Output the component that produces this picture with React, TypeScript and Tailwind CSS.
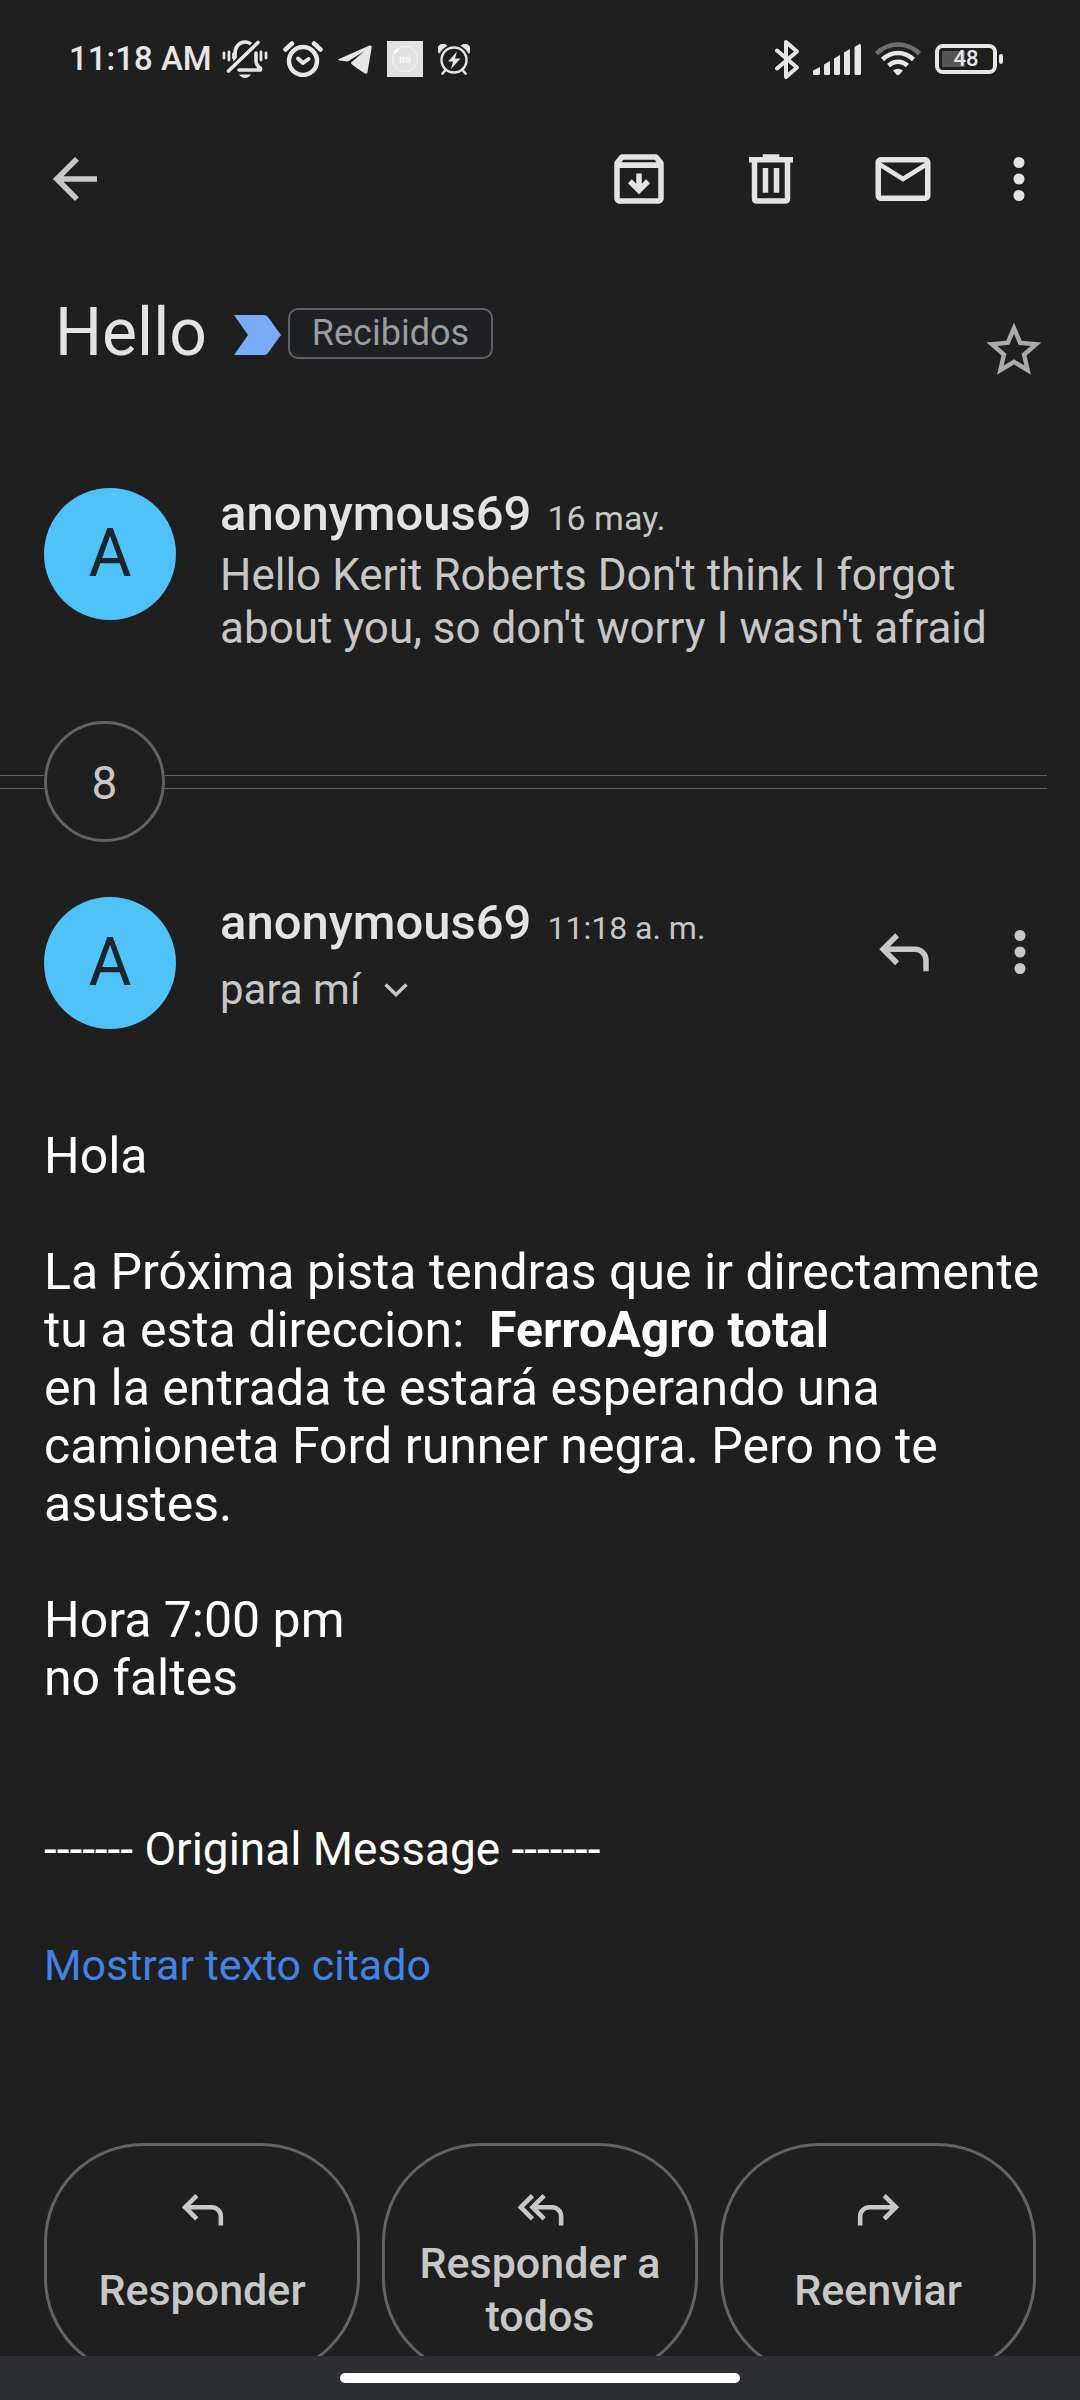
import type { ReactNode } from "react";

const REPLY = "M9.5 5.9 4.41 11l5.09 5.1M4.6 11H16a4 4 0 0 1 4 4v4";

function StrokeIcon({ d, size }: { d: string; size: string }) {
  return (
    <svg viewBox="0 0 24 24" className={size} fill="none" stroke="currentColor" strokeWidth="2" aria-hidden="true">
      <path d={d} />
    </svg>
  );
}

function FillIcon({ d }: { d: string }) {
  return (
    <svg viewBox="0 0 24 24" className="size-[66px]" fill="currentColor" fillRule="evenodd" aria-hidden="true">
      <path d={d} />
    </svg>
  );
}

function IconButton({ label, children }: { label: string; children: ReactNode }) {
  return (
    <button type="button" aria-label={label} className="size-[66px] shrink-0">
      {children}
    </button>
  );
}

function MoreIcon() {
  return (
    <svg viewBox="0 0 24 24" className="size-[66px]" fill="currentColor" aria-hidden="true">
      <circle cx="12" cy="6" r="2" />
      <circle cx="12" cy="12" r="2" />
      <circle cx="12" cy="18" r="2" />
    </svg>
  );
}

function StatusBar() {
  return (
    <div className="flex h-[118px] shrink-0 items-center justify-between pr-[77px] pl-[69px] text-[#e6e6e6]">
      <div className="flex items-center gap-[15px]">
        <div className="flex items-center gap-[10px]">
          <span className="text-[33px] leading-10 font-medium">11:18 AM</span>
          <svg viewBox="0 0 46 38" className="h-[38px] w-[46px]" fill="none" stroke="currentColor" strokeWidth="3.6" strokeLinecap="round" aria-label="Vibración">
            <path d="M13 23V14C13 7 17 2 23 2c3 0 5 1 7 3" />
            <path d="M34 13v8c0 3 1.500 5 4.500 7.500v1.500H17" strokeLinejoin="round" />
            <path d="M6.500 30.500 35 2.500" stroke="#1f1f1f" strokeWidth="6" />
            <path d="M6.500 31 36 2.500" />
            <path d="M2 13v5M7 12v8M11.500 14v4M39 12v8M44 13v5" strokeWidth="2.800" />
            <path d="M17 34.500h12c-1.500 2.300-3.500 3.500-6 3.500s-4.500-1.200-6-3.500z" fill="currentColor" stroke="none" />
          </svg>
        </div>
        <svg viewBox="0 0 40 36" className="h-9 w-10" fill="none" stroke="currentColor" strokeLinecap="round" aria-label="Alarma">
          <circle cx="20" cy="20" r="14" strokeWidth="4.500" />
          <path d="M15 17.500 20 22l5.500-4" strokeWidth="4" strokeLinejoin="round" />
          <path d="M2.500 8.500 9 2.500M37.500 8.500 31 2.500" strokeWidth="4.500" />
        </svg>
        <svg viewBox="0 0 34 29" className="h-[29px] w-[34px]" fill="currentColor" aria-label="Telegram">
          <path d="M1 14 31.500.6c1.500-.5 2.500.3 2.200 2L29.500 27c-.3 1.700-1.500 2.200-3 1.300L18 22.500l-4.300-3.300c-.8-.7-.8-1.300 0-2.100L26 6.500 10.500 16c-1 .6-1.800.6-2.800.3L1.200 15.600c-1.100-.4-1.200-1.100-.2-1.600z" />
        </svg>
        <svg viewBox="0 0 36 36" className="size-9" aria-label="Mi">
          <rect width="36" height="36" fill="#e2e2e2" />
          <circle cx="18" cy="18" r="12.500" fill="none" stroke="#f6f6f6" strokeWidth="1" />
          <path d="m7.500 12 3.500-4" stroke="#fff" strokeWidth="2.500" />
          <text x="18" y="22" textAnchor="middle" fontSize="10" fontWeight="700" fill="#f8f8f8">mi</text>
        </svg>
        <svg viewBox="0 0 32 31" className="h-[31px] w-8" fill="none" stroke="currentColor" strokeLinecap="round" aria-label="Carga programada">
          <path d="M1 9a5 5 0 0 1 8-7zM31 9a5 5 0 0 0-8-7z" fill="currentColor" strokeWidth="1" />
          <circle cx="16" cy="16" r="13" stroke="#1f1f1f" strokeWidth="5" />
          <circle cx="16" cy="16" r="12.500" strokeWidth="2.400" />
          <path d="m7.500 26-3 3.500M24.500 26l3 3.500" strokeWidth="2.600" />
          <path d="M19 7.500 10 17.500h5L13 25l9.500-10.500H17z" fill="currentColor" stroke="none" />
        </svg>
      </div>
      <div className="flex items-center gap-[14px]">
        <svg viewBox="0 0 24 39" className="h-[39px] w-6" fill="none" stroke="currentColor" strokeWidth="4" strokeLinecap="round" strokeLinejoin="round" aria-label="Bluetooth">
          <path d="M2 10.500 22 27.500 11 37V2l11 9.500L2 28.500" />
        </svg>
        <svg viewBox="0 0 48 31" className="h-[31px] w-12" fill="currentColor" aria-label="Señal móvil">
          <path d="M0 26.500 7 23v6.500q0 1.500-1.500 1.500h-4Q0 31 0 29.500zM11 20.500l6-3.500v12.500q0 1.500-1.500 1.500h-3q-1.500 0-1.500-1.500zM21 14.500l6-3.500v18.500q0 1.500-1.500 1.500h-3q-1.500 0-1.500-1.500zM31 8.500 37 5v24.500q0 1.500-1.500 1.500h-3q-1.500 0-1.500-1.500zM41.500 3l5-3q1.500 0 1.500 1.500v28q0 1.500-1.500 1.500H43q-1.500 0-1.500-1.500z" />
        </svg>
        <svg viewBox="0 0 46 34" className="h-[34px] w-[46px]" fill="none" stroke="currentColor" strokeWidth="4.500" aria-label="Wi-Fi">
          <path d="M1.500 11.500Q11 2.500 23 2.500t21.500 9" stroke="#6e6e6e" />
          <path d="M7.500 17.500q7-6.500 15.500-6.500t15.500 6.500M13.500 23.500q4.500-3.800 9.500-3.800t9.500 3.800" />
          <path d="M18 28.500q5-3.500 10 0L24.500 32.500q-1.500 1.500-3 0z" fill="currentColor" stroke="none" />
        </svg>
        <div className="flex items-center gap-[2px]" aria-label="Batería 48 %">
          <div className="flex h-[30px] w-[62px] items-center justify-center rounded-lg border-4 border-[#e6e6e6] bg-linear-to-r from-[#555555] from-48% to-[#1f1f1f] to-48% bg-clip-content p-[3px]">
            <span className="text-[22px] leading-[22px] font-medium">48</span>
          </div>
          <div className="h-[10px] w-1 rounded-sm bg-[#e6e6e6]" />
        </div>
      </div>
    </div>
  );
}

function Avatar() {
  return (
    <div className="mt-[2px] flex size-[132px] shrink-0 items-center justify-center rounded-full bg-[#4fc3f7] text-[66px] leading-[72px] text-[#1b262c]">
      A
    </div>
  );
}

function ActionButton({ icon, children }: { icon: string; children: ReactNode }) {
  return (
    <button type="button" className="flex h-[234px] min-w-0 flex-1 flex-col items-center rounded-[99px] border-[3px] border-[#636266] px-5 pt-9 text-[43px] leading-[53px] font-medium text-[#c7c7c7]">
      <StrokeIcon d={icon} size="size-[55px] shrink-0" />
      <span className="flex h-[106px] items-center text-center">{children}</span>
    </button>
  );
}

export default function App() {
  return (
    <div className="flex h-screen flex-col bg-[#1f1f1f] font-['Roboto',sans-serif] text-[#c7c7c7]">
      <StatusBar />
      <header className="flex shrink-0 items-center justify-between pt-7 pr-7 pl-[42px] text-[#e3e3e3]">
        <button type="button" aria-label="Atrás" className="size-[66px] text-[#c7c7c7]">
          <StrokeIcon d="M12.700 4.700 5.400 12l7.300 7.300M5 12h15" size="size-[66px]" />
        </button>
        <div className="flex items-center gap-[50px]">
          <div className="flex items-center gap-[66px]">
            <IconButton label="Archivar">
              <FillIcon d="M20.540 5.230 19.150 3.550C18.880 3.210 18.470 3 18 3H6c-.470 0-.880.210-1.160.550L3.460 5.230C3.170 5.570 3 6.020 3 6.500V19c0 1.100.900 2 2 2h14c1.100 0 2-.900 2-2V6.500c0-.480-.170-.930-.460-1.270zM6.240 5h11.520l.600.900H5.640zM5 19V8h14v11zM16 13.500l-4 4-4-4 1.400-1.400 1.600 1.600V10h2v3.700l1.600-1.600z" />
            </IconButton>
            <IconButton label="Eliminar">
              <FillIcon d="M9 3h6v1h5v2h-1v13q0 2-2 2H7q-2 0-2-2V6H4V4h5zM7 6v13h10V6zM9 8h2v9H9zM13 8h2v9h-2z" />
            </IconButton>
            <IconButton label="Marcar como no leído">
              <FillIcon d="M22 6c0-1.100-.900-2-2-2H4c-1.100 0-2 .900-2 2v12c0 1.100.900 2 2 2h16c1.100 0 2-.900 2-2V6zm-2 0-8 5-8-5h16zm0 12H4V8l8 5 8-5v10z" />
            </IconButton>
          </div>
          <IconButton label="Más opciones">
            <MoreIcon />
          </IconButton>
        </div>
      </header>
      <main className="min-h-0 flex-1 overflow-y-auto pt-[85px] [scrollbar-width:none]">
        <div className="flex items-start justify-between pr-[33px] pl-[55px]">
          <div className="flex h-[72px] items-center">
            <h1 className="text-[66px] leading-[72px] text-[#e3e3e3]">Hello</h1>
            <svg viewBox="0 0 47 40" className="mt-1 mr-[7px] ml-[27px] h-10 w-[47px]" fill="#7baaf7" aria-label="Importante">
              <path d="M0 0h30q2.500 0 4 2L47 20 34 38q-1.500 2-4 2H0l14-20z" />
            </svg>
            <button type="button" className="h-[51px] rounded-[10px] border-2 border-[#5f6166] bg-[#1f2024] px-[22px] text-[36px] leading-[44px] text-[#9a9ca0]">
              Recibidos
            </button>
          </div>
          <button type="button" aria-label="Destacar" className="mt-5 size-[66px] text-[#ababab]">
            <FillIcon d="M22 9.240l-7.190-.620L12 2 9.190 8.630 2 9.240l5.460 4.730L5.820 21 12 17.270 18.180 21l-1.630-7.030L22 9.240zM12 15.400l-3.760 2.270 1-4.280-3.320-2.880 4.380-.380L12 6.100l1.710 4.040 4.380.380-3.320 2.880 1 4.280L12 15.400z" />
          </button>
        </div>

        <article className="mt-[103px] flex items-start gap-11 px-11">
          <Avatar />
          <div className="min-w-0 flex-1">
            <div className="flex items-baseline gap-4">
              <h2 className="text-[49px] leading-[56px] font-medium text-[#e3e3e3]">anonymous69</h2>
              <time className="text-[34px] leading-10">16 may.</time>
            </div>
            <p className="mt-[7px] text-[44px] leading-[53px]">Hello Kerit Roberts Don't think I forgot about you, so don't worry I wasn't afraid</p>
          </div>
        </article>

        <div className="mt-[66px] mr-[33px] flex items-center">
          <div className="h-[14px] w-11 border-y border-[#626266]" />
          <button type="button" aria-label="8 mensajes más" className="flex size-[121px] items-center justify-center rounded-full border-[3px] border-[#626266] pt-1 text-[46px] leading-[53px]">
            8
          </button>
          <div className="h-[14px] flex-1 border-y border-[#626266]" />
        </div>

        <article className="mt-[53px]">
          <div className="flex items-start pr-[27px] pl-11">
            <Avatar />
            <div className="ml-11 min-w-0 flex-1">
              <div className="flex items-baseline gap-4">
                <h2 className="text-[49px] leading-[56px] font-medium text-[#e3e3e3]">anonymous69</h2>
                <time className="text-[32px] leading-10">11:18 a. m.</time>
              </div>
              <button type="button" className="mt-3 flex items-center gap-6 text-[42px] leading-[53px]">
                para mí
                <svg viewBox="0 0 24 14" className="h-[14px] w-6" fill="none" stroke="currentColor" strokeWidth="3.500" aria-hidden="true">
                  <path d="m1.500 1.500 10.500 10 10.500-10" />
                </svg>
              </button>
            </div>
            <div className="mt-6 flex gap-[50px]">
              <IconButton label="Responder">
                <StrokeIcon d={REPLY} size="size-[66px]" />
              </IconButton>
              <IconButton label="Más opciones del mensaje">
                <MoreIcon />
              </IconButton>
            </div>
          </div>

          <div className="mt-[98px] pr-7 pl-11 text-[50px] leading-[58px] text-white">
            <p>Hola</p>
            <p className="mt-[58px]">
              La Próxima pista tendras que ir directamente tu a esta direccion:&nbsp; <strong className="font-bold">FerroAgro total</strong>
              <br />
              en la entrada te estará esperando una camioneta Ford runner negra. Pero no te asustes.
            </p>
            <p className="mt-[58px]">
              Hora 7:00 pm
              <br />
              no faltes
            </p>
            <p className="mt-[113px] text-[46px] leading-[58px]">------- Original Message -------</p>
            <a href="#citado" className="mt-[58px] block text-[43px] leading-[58px] text-[#4483e6]">
              Mostrar texto citado
            </a>
          </div>
        </article>

        <div className="mt-[149px] flex gap-[22px] px-11">
          <ActionButton icon={REPLY}>Responder</ActionButton>
          <ActionButton icon="M8.500 5.900 3.410 11l5.090 5.100M13.600 5.900 8.510 11l5.090 5.100M8.700 11H17a4 4 0 0 1 4 4v4">Responder a todos</ActionButton>
          <ActionButton icon="M14.500 5.900 19.590 11l-5.090 5.100M19.400 11H8a4 4 0 0 0-4 4v4">Reenviar</ActionButton>
        </div>
      </main>
      <div className="flex h-11 shrink-0 justify-center bg-[#2d2e32] pt-[17px]">
        <div className="h-[10px] w-[37%] rounded-full bg-white" />
      </div>
    </div>
  );
}
